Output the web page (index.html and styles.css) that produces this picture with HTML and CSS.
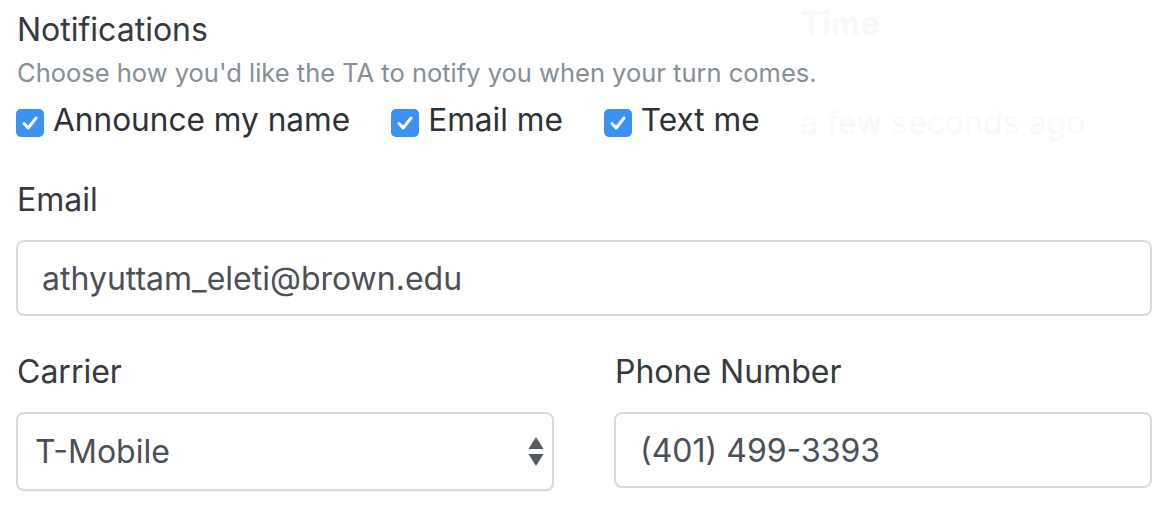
FILE: index.html
```html
<!DOCTYPE html>
<html>
<head>
<meta charset="utf-8">
<link rel="stylesheet" href="styles.css">
</head>
<body>
<div class="backdrop-layer">
  <div class="bg-head">Time</div>
  <div class="bg-rule"></div>
  <div class="bg-cell">a few seconds ago</div>
</div>
<div class="modal-body">
  <div class="group-notify">
    <div class="label">Notifications</div>
    <div class="muted">Choose how you'd like the TA to notify you when your turn comes.</div>
    <div class="checks">
      <label class="check"><span class="box"><svg viewBox="0 0 28 28" width="28" height="28"><path d="M8 14.5 L12.2 19 L20 9" fill="none" stroke="#fff" stroke-width="3" stroke-linecap="round" stroke-linejoin="round"/></svg></span><span class="check-text">Announce my name</span></label>
      <label class="check"><span class="box"><svg viewBox="0 0 28 28" width="28" height="28"><path d="M8 14.5 L12.2 19 L20 9" fill="none" stroke="#fff" stroke-width="3" stroke-linecap="round" stroke-linejoin="round"/></svg></span><span class="check-text">Email me</span></label>
      <label class="check"><span class="box"><svg viewBox="0 0 28 28" width="28" height="28"><path d="M8 14.5 L12.2 19 L20 9" fill="none" stroke="#fff" stroke-width="3" stroke-linecap="round" stroke-linejoin="round"/></svg></span><span class="check-text">Text me</span></label>
    </div>
  </div>
  <div class="group-email">
    <div class="label">Email</div>
    <div class="control">athyuttam_eleti@brown.edu</div>
  </div>
  <div class="row">
    <div class="col">
      <div class="label">Carrier</div>
      <div class="control select">
        <span>T-Mobile</span>
        <svg class="arrows" viewBox="0 0 16 30" width="16" height="30"><path d="M8 0 L15.5 12 L0.5 12 Z" fill="#555a5f"/><path d="M0.5 17 L15.5 17 L8 29 Z" fill="#555a5f"/></svg>
      </div>
    </div>
    <div class="col">
      <div class="label">Phone Number</div>
      <div class="control">(401) 499-3393</div>
    </div>
  </div>
</div>
</body>
</html>
```
FILE: styles.css
```css
html, body {
  margin: 0;
  padding: 0;
  background: #fff;
}
body {
  font-family: Inter, "Noto Sans", sans-serif;
  color: #343a40;
  width: 1170px;
  height: 512px;
  overflow: hidden;
  position: relative;
}
.backdrop-layer {
  position: absolute;
  left: 0;
  top: 0;
  width: 1170px;
  height: 512px;
  z-index: 0;
}
.bg-head {
  position: absolute;
  left: 801px;
  top: 4px;
  font-size: 32px;
  font-weight: 700;
  color: #f8f8f8;
}
.bg-rule {
  position: absolute;
  left: 800px;
  top: 71px;
  width: 370px;
  height: 2px;
  background: #fbfbfb;
}
.bg-cell {
  position: absolute;
  left: 800px;
  top: 103px;
  font-size: 32px;
  color: #f9f9f9;
}
.modal-body {
  position: relative;
  z-index: 1;
  padding: 6px 18px 0 16px;
}
.label {
  font-size: 32px;
  line-height: 48px;
  padding-left: 1px;
  color: #343a40;
}
.muted {
  font-size: 25.5px;
  line-height: 38.4px;
  color: #868e96;
  padding-left: 1px;
}
.checks {
  display: flex;
  align-items: flex-start;
  margin-top: 4px;
}
.check {
  display: flex;
  align-items: flex-start;
  margin-right: 41px;
}
.box {
  width: 28px;
  height: 28px;
  border-radius: 5px;
  background: #3b92f5;
  display: block;
  margin-left: 0;
  margin-right: 9px;
  margin-top: 13px;
}
.box svg { display: block; }
.check-text {
  font-size: 31.6px;
  line-height: 48px;
  color: #2d3237;
}
.group-email {
  margin-top: 32px;
}
.group-email .label {
  margin-bottom: 16px;
}
.control {
  box-sizing: border-box;
  height: 76px;
  border: 2px solid #dadada;
  border-radius: 8px;
  padding: 0 24px;
  display: flex;
  align-items: center;
  font-size: 32px;
  color: #4b5056;
}
.row {
  display: grid;
  grid-template-columns: 1fr 1fr;
  column-gap: 60px;
  margin-top: 32px;
}
.row .label {
  margin-bottom: 16px;
}
.select {
  height: 79px;
  padding: 0 8px 0 17px;
  justify-content: space-between;
  box-shadow: 0 1px 1px rgba(0,0,0,0.06);
}
.arrows { display: block; }
```
